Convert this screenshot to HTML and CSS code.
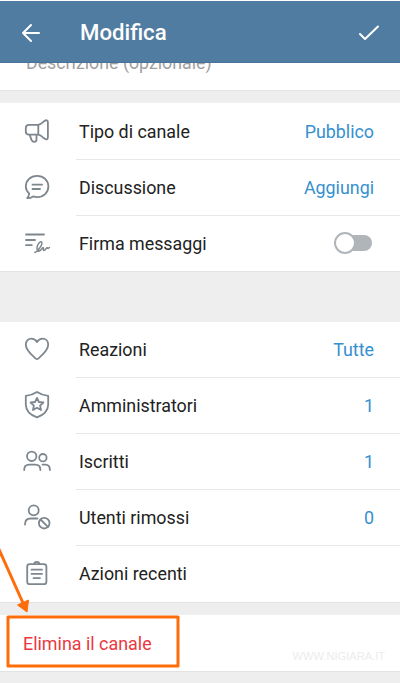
FILE: index.html
```html
<!DOCTYPE html>
<html lang="it">
<head>
<meta charset="utf-8">
<title>Modifica</title>
<link rel="stylesheet" href="styles.css">
</head>
<body>
<div class="screen">
  <header class="bar">
    <svg class="back" viewBox="0 0 20 20"><path d="M18 10H2M10 2L2 10l8 8"/></svg>
    <h1>Modifica</h1>
    <svg class="check" viewBox="0 0 20 16"><path d="M1 9l5 5L19 1.500"/></svg>
  </header>
  <div class="description"><span>Descrizione (opzionale)</span></div>
  <section class="group upper">
    <div class="row">
      <svg class="icon" viewBox="0 0 40 40"><path d="M21.300 12.800H12q-3.200 0-3.200 3.200v3.500q0 3.200 3.200 3.200h9.300M21.300 12.800V22.700M21.300 12.800q2.300-.5 5.700-3.500 3.900-2.500 3.900 1v15q0 3.500-3.900 1-3.200-3-5.700-3.600M12.700 22.900l1.800 5q.8 2 2.800 2t2.200-2.200v-4.500"/></svg>
      <div class="cell"><span>Tipo di canale</span><span class="value">Pubblico</span></div>
    </div>
    <div class="row">
      <svg class="icon" viewBox="0 0 40 40"><path d="M12.200 25.700C10.200 23.700 8.800 21.200 8.800 18.500 8.800 12.400 13.800 7.800 20.100 7.800s11.300 4.600 11.300 10.700-5 10.600-11.300 10.600q-2.200 0-4-.7-2.500 1.700-5.900 1.700 1.800-2 2-4.400zM15.500 16.700h9.500M15.500 21h7.500"/></svg>
      <div class="cell"><span>Discussione</span><span class="value">Aggiungi</span></div>
    </div>
    <div class="row">
      <svg class="icon" viewBox="0 0 40 40"><path d="M9 10.500H27M9 16h9M9 21.200h5.800"/><path class="ink" d="M17.800 28.300c1.700.6 8-7.300 7-10-1-2-4.200 1.500-4.700 4.500-.6 3.500.8 5.300 3 3.800 1.800-1.200 2.500-3.200 3.200-3 .8.300-.6 2.800.5 3 1.600.2 2.400-3.200 3.300-2.800.7.300.2 1.500 2.300-.3"/></svg>
      <div class="cell"><span>Firma messaggi</span><span class="toggle"></span></div>
    </div>
  </section>
  <section class="group lower">
    <div class="row">
      <svg class="icon" viewBox="0 0 40 40"><path d="M20 12C18.500 9.800 16.700 8.700 14.500 8.700c-3.500 0-5.700 2.600-5.700 6 0 5.600 5.700 10 10 13.900q1.200 1.100 2.400 0c4.300-3.900 10-8.300 10-13.900 0-3.400-2.200-6-5.700-6-2.200 0-4 1.100-5.500 3.300z"/></svg>
      <div class="cell"><span>Reazioni</span><span class="value">Tutte</span></div>
    </div>
    <div class="row">
      <svg class="icon" viewBox="0 0 40 40"><path d="M20 5.900q5 3.200 11.200 4v8.600c0 6.200-5 10.600-11.200 12.900C13.800 29.100 8.800 24.700 8.800 18.500V9.900Q15 9.100 20 5.900z"/><path d="M20 11.900l1.900 4.100 4.500.5-3.300 3.100.9 4.400-4-2.200-4 2.200.9-4.400-3.300-3.100 4.500-.5z"/></svg>
      <div class="cell"><span>Amministratori</span><span class="value">1</span></div>
    </div>
    <div class="row">
      <svg class="icon" viewBox="0 0 40 40"><circle cx="14.700" cy="14.300" r="4.700"/><circle cx="25.900" cy="15.700" r="3.700"/><path d="M7.200 28c0-3.600 2-5.300 5.200-5.300h5.800c3.200 0 5.200 1.700 5.200 5.300M25.500 22.700h2.700c3 0 4.700 1.800 4.700 5.300"/></svg>
      <div class="cell"><span>Iscritti</span><span class="value">1</span></div>
    </div>
    <div class="row">
      <svg class="icon" viewBox="0 0 40 40"><circle cx="16.700" cy="12.300" r="5"/><path d="M8 26.500c0-4 2-6 5.500-6h7"/><circle cx="27.200" cy="25.200" r="5.300"/><path d="M23.500 21.500l7.400 7.400"/></svg>
      <div class="cell"><span>Utenti rimossi</span><span class="value">0</span></div>
    </div>
    <div class="row">
      <svg class="icon" viewBox="0 0 40 40"><rect x="10.200" y="10.200" width="19.200" height="20" rx="2.500"/><path d="M17.300 10.200c0-3.200 5-3.200 5 0M14.500 15.700h10.500M14.500 19.900h10.500M16.500 24.100h6.500"/></svg>
      <div class="cell"><span>Azioni recenti</span></div>
    </div>
  </section>
  <section class="delete"><span>Elimina il canale</span><small>WWW.NIGIARA.IT</small></section>
  <svg class="annotation" viewBox="0 0 200 140">
    <path class="shaft" d="M-3 5L23 63"/>
    <path class="head" d="M17.500 65L28.500 60 27 72z"/>
    <rect x="8" y="77" width="170" height="49"/>
  </svg>
</div>
</body>
</html>
```
FILE: styles.css
```css
*, *::before { box-sizing: border-box; }
body { margin: 0; background: #fff; font-family: Roboto, sans-serif; }
.screen { position: relative; height: 683px; padding-top: 1px; background: #eee; overflow: hidden; box-shadow: inset 0 1px #fff; }
.bar { display: flex; align-items: center; height: 62px; padding: 0 20px 0 21px; background: #507ca1; border-bottom: 1px solid #47739a; color: #fff; }
.bar svg { fill: none; stroke: #fff; stroke-width: 2; stroke-linecap: round; stroke-linejoin: round; }
.back { width: 20px; height: 20px; margin-top: 2px; }
.check { width: 20px; height: 16px; margin: 2px 1px 0 auto; }
h1 { margin: 0 0 0 39px; font-size: 22.200px; line-height: 30px; font-weight: 500; }
.description { height: 28px; padding-left: 26px; background: #fff; border-bottom: 1px solid #e4e4e4; overflow: hidden; color: #a0a0a0; font-size: 17.800px; line-height: 22px; }
.description span { display: block; margin-top: -11px; }
.group { margin-top: 12px; background: #fff; box-shadow: 0 1px #e2e2e2; }
.lower { margin-top: 51px; }
.row { display: flex; align-items: center; height: 56px; padding-left: 17px; }
.icon { width: 40px; height: 40px; fill: none; stroke: #7e868e; stroke-width: 1.8; stroke-linecap: round; stroke-linejoin: round; }
.icon .ink { stroke-width: 1.5; }
.cell { display: flex; flex: 1; align-items: center; justify-content: space-between; height: 56px; margin-left: 19px; padding: 1px 26px 0 3px; border-bottom: 1px solid #e8e8e8; color: #222; font-size: 17.850px; line-height: 22px; }
.upper .row:first-child { height: 57px; }
.upper .row:first-child .cell { height: 57px; }
.upper .row:last-child { height: 55px; }
.upper .row:last-child .cell { height: 55px; }
.row:last-child .cell { border-bottom-color: transparent; }
.value { color: #3590d0; }
.toggle { display: flex; align-items: center; width: 36px; height: 16px; margin: -1px 2px 0 0; border-radius: 8px; background: #b0b5ba; }
.toggle::before { content: ""; flex: none; width: 22px; height: 22px; margin-left: -2px; border: 2px solid #b0b5ba; border-radius: 50%; background: #fff; }
.delete { display: flex; align-items: center; justify-content: space-between; height: 56px; margin-top: 13px; padding: 2px 15px 0 23px; background: #fff; box-shadow: 0 1px #e2e2e2; color: #eb3840; font-size: 17.900px; line-height: 22px; }
.delete small { margin-top: 24px; color: #ececec; font: 11.100px "Liberation Sans", sans-serif; }
.annotation { position: absolute; left: 0; top: 540px; width: 200px; height: 140px; fill: none; stroke: #ff6d0a; stroke-width: 3; stroke-linejoin: round; }
.annotation .head { fill: #ff6d0a; stroke-width: 1; }
```
